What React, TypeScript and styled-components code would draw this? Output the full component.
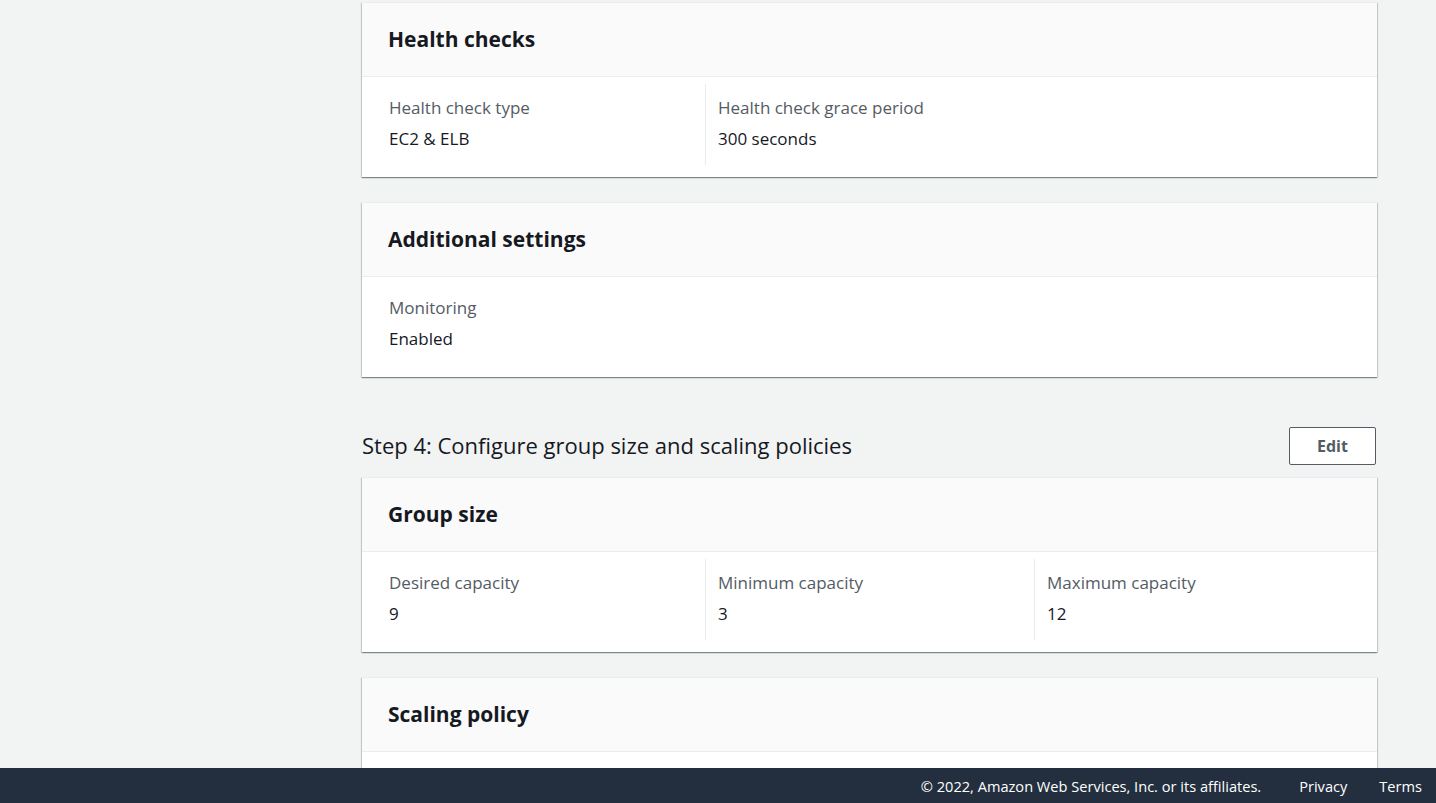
import React from "react";
import styled, { createGlobalStyle } from "styled-components";

const Global = createGlobalStyle`
  html, body { margin: 0; padding: 0; background: #f2f3f3; }
  body { font-family: "Open Sans", "Noto Sans", Arial, sans-serif; color: #16191f; }
`;

const Page = styled.div`
  min-height: 803px;
  padding: 2px 59px 60px 362px;
  box-sizing: border-box;
`;

const Stack = styled.div`
  display: flex;
  flex-direction: column;
  width: 1015px;
`;

const Card = styled.section<{ $mt?: number }>`
  background: #fff;
  border-top: 1px solid #eaeded;
  box-shadow: 0 1px 1px 0 rgba(0, 28, 36, 0.3), 1px 1px 1px 0 rgba(0, 28, 36, 0.15),
    -1px 1px 1px 0 rgba(0, 28, 36, 0.15);
  margin-top: ${(p) => p.$mt ?? 0}px;
`;

const CardHeader = styled.header`
  background: #fafafa;
  border-bottom: 1px solid #eaeded;
  padding: 21px 26px 22px;
`;

const CardTitle = styled.h2`
  margin: 0;
  font-size: 21px;
  line-height: 30px;
  font-weight: 700;
  color: #16191f;
`;

const CardBody = styled.div<{ $h?: number }>`
  padding: 7px 14px 12px;
  ${(p) => (p.$h ? `height: ${p.$h}px;` : "")}
`;

const Columns = styled.div`
  display: grid;
  grid-template-columns: repeat(3, 1fr);
`;

const Column = styled.div<{ $divider?: boolean }>`
  padding: 13px 12px 15px;
  border-left: 1px solid ${(p) => (p.$divider ? "#eaeded" : "transparent")};
`;

const Label = styled.div`
  font-size: 17px;
  line-height: 22px;
  color: #545b64;
`;

const Value = styled.div`
  font-size: 17px;
  line-height: 22px;
  margin-top: 9px;
  color: #16191f;
`;

const StepRow = styled.div`
  display: flex;
  align-items: center;
  justify-content: space-between;
  margin-top: 50px;
  margin-bottom: 12px;
`;

const StepTitle = styled.h1`
  margin: 0 0 2px;
  font-size: 22px;
  font-weight: 400;
  line-height: 32px;
  color: #16191f;
`;

const Button = styled.button`
  width: 87px;
  height: 38px;
  margin-right: 1px;
  background: #fff;
  border: 1px solid #545b64;
  border-radius: 2px;
  color: #545b64;
  font-family: inherit;
  font-size: 16px;
  font-weight: 700;
  cursor: pointer;
`;

const Footer = styled.footer`
  position: fixed;
  left: 0;
  right: 0;
  bottom: 0;
  height: 35px;
  background: #232f3e;
  display: flex;
  align-items: center;
  justify-content: flex-end;
  padding-right: 14px;
  gap: 32px;
  color: #fff;
  font-size: 14.6px;
  line-height: 20px;
  padding-top: 1px;
  box-sizing: border-box;
`;

const FooterText = styled.span<{ $mr?: number }>`
  margin-right: ${(p) => p.$mr ?? 0}px;
`;

type Item = { label: string; value: string };

const InfoCard: React.FC<{ title: string; items: Item[]; mt?: number }> = ({ title, items, mt }) => (
  <Card $mt={mt}>
    <CardHeader>
      <CardTitle>{title}</CardTitle>
    </CardHeader>
    <CardBody>
      <Columns>
        {items.map((it, i) => (
          <Column key={it.label} $divider={i > 0}>
            <Label>{it.label}</Label>
            <Value>{it.value}</Value>
          </Column>
        ))}
      </Columns>
    </CardBody>
  </Card>
);

export default function App() {
  return (
    <>
      <Global />
      <Page>
        <Stack>
          <InfoCard
            title="Health checks"
            items={[
              { label: "Health check type", value: "EC2 & ELB" },
              { label: "Health check grace period", value: "300 seconds" },
            ]}
          />
          <InfoCard
            mt={25}
            title="Additional settings"
            items={[{ label: "Monitoring", value: "Enabled" }]}
          />
          <StepRow>
            <StepTitle>Step 4: Configure group size and scaling policies</StepTitle>
            <Button>Edit</Button>
          </StepRow>
          <InfoCard
            title="Group size"
            items={[
              { label: "Desired capacity", value: "9" },
              { label: "Minimum capacity", value: "3" },
              { label: "Maximum capacity", value: "12" },
            ]}
          />
          <Card $mt={25}>
            <CardHeader>
              <CardTitle>Scaling policy</CardTitle>
            </CardHeader>
            <CardBody $h={80} />
          </Card>
        </Stack>
      </Page>
      <Footer>
        <FooterText $mr={6}>© 2022, Amazon Web Services, Inc. or its affiliates.</FooterText>
        <FooterText>Privacy</FooterText>
        <FooterText>Terms</FooterText>
      </Footer>
    </>
  );
}
